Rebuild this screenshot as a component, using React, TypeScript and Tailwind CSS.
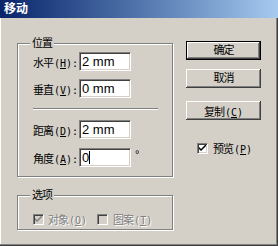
import React from "react";

const font = "font-['Liberation_Sans','Noto_Sans_CJK_SC',sans-serif]";
const mono = "font-['DejaVu_Sans_Mono',monospace] text-[10px]";

const Key = ({ k }: { k: string }) => <span className="underline underline-offset-[1px]">{k}</span>;

// "水平" + "(H):" styled like the old bitmap font: narrow cjk, monospace latin
const Label = ({ text, k, colon }: { text: string; k: string; colon?: boolean }) => (
    <span className="whitespace-nowrap">
        <span className="text-[11px] tracking-[-1px]">{text}</span>
        <span className={`${mono} ml-[1px]`}>
            (<Key k={k} />){colon ? ":" : ""}
        </span>
    </span>
);

const Field = ({ children }: { children: React.ReactNode }) => (
    <div className="w-[52px] h-[19px] bg-white flex items-center pl-[2px] text-[13px] text-black border-t border-l border-[#808080] border-b border-r border-b-white border-r-white shadow-[inset_1px_1px_0_#404040,inset_-1px_-1px_0_#d4d0c8]">
        {children}
    </div>
);

const Row = ({ label, k, value, caret }: { label: string; k: string; value: string; caret?: boolean }) => (
    <div className="flex items-center h-[19px]">
        <div className="w-[46px] text-black">
            <Label text={label} k={k} colon />
        </div>
        <Field>
            {value}
            {caret && <span className="w-[1px] h-[13px] bg-black" />}
        </Field>
    </div>
);

const Button = ({ children, isDefault }: { children: React.ReactNode; isDefault?: boolean }) => (
    <div
        className={`w-[75px] h-[19px] flex items-center justify-center text-black bg-[#d4d0c8] shadow-[inset_-1px_-1px_0_#404040,inset_1px_1px_0_#fff,inset_-2px_-2px_0_#808080] ${isDefault ? "border border-black" : ""
            }`}
    >
        {children}
    </div>
);

const Check = ({ checked, disabled }: { checked: boolean; disabled?: boolean }) => (
    <div
        className={`w-[11px] h-[11px] flex items-center justify-center border-t border-l border-[#808080] border-b border-r border-b-white border-r-white shadow-[inset_1px_1px_0_#404040,inset_-1px_-1px_0_#d4d0c8] ${disabled ? "bg-[#d4d0c8]" : "bg-white"
            }`}
    >
        {checked && (
            <svg width="7" height="7" viewBox="0 0 7 7">
                <path d="M0 2 L0 4 L2 6 L7 1 L7 -1 L2 4 Z" fill={disabled ? "#808080" : "#000"} />
            </svg>
        )}
    </div>
);

const Group = ({ title, className, children }: { title: string; className: string; children: React.ReactNode }) => (
    <div className={`relative border border-[#808080] shadow-[1px_1px_0_#fff,inset_1px_1px_0_#fff] ${className}`}>
        <span className="absolute -top-[8px] left-[12px] px-[2px] bg-[#d4d0c8] text-[11px] tracking-[-1px] leading-[14px] text-black">{title}</span>
        {children}
    </div>
);

export default function App() {
    return (
        <div className={`w-[278px] h-[246px] bg-[#d4d0c8] shadow-[inset_-1px_-1px_0_#404040,inset_-2px_-2px_0_#808080,inset_1px_1px_0_#fff] ${font}`}>
            <div className="h-[18px] bg-linear-to-r from-[#0a246a] to-[#a6caf0] flex items-center pl-[4px] text-white font-bold text-[12px]">
                移动
            </div>

            <div className="flex pl-[17px] pt-[23px]">
                <div className="w-[156px]">
                    <Group title="位置" className="mt-[2px] h-[134px] pt-[8px] pl-[15px]">
                        <Row label="水平" k="H" value="2 mm" />
                        <div className="mt-[8px]">
                            <Row label="垂直" k="V" value="0 mm" />
                        </div>
                        <div className="mt-[10px] w-[125px] h-[2px] border-t border-[#808080] border-b border-b-white" />
                        <div className="mt-[10px]">
                            <Row label="距离" k="D" value="2 mm" />
                        </div>
                        <div className="mt-[9px] flex items-start">
                            <Row label="角度" k="A" value="0" caret />
                            <span className="ml-[4px] -mt-[2px] text-[11px] text-black">°</span>
                        </div>
                    </Group>

                    <Group title="选项" className="mt-[18px] h-[35px] pt-[11px] pl-[15px]">
                        <div className="flex items-center text-[#808080] [text-shadow:1px_1px_0_#fff]">
                            <Check checked disabled />
                            <span className="ml-[4px]">
                                <Label text="对象" k="O" />
                            </span>
                            <div className="ml-[10px]">
                                <Check checked={false} disabled />
                            </div>
                            <span className="ml-[5px]">
                                <Label text="图案" k="T" />
                            </span>
                        </div>
                    </Group>
                </div>

                <div className="ml-[13px] flex flex-col">
                    <Button isDefault>
                        <span className="text-[11px] tracking-[-1px]">确定</span>
                    </Button>
                    <div className="mt-[9px]">
                        <Button>
                            <span className="text-[11px] tracking-[-1px]">取消</span>
                        </Button>
                    </div>
                    <div className="mt-[13px]">
                        <Button>
                            <Label text="复制" k="C" />
                        </Button>
                    </div>
                    <div className="mt-[16px] ml-[11px] flex items-center text-black">
                        <Check checked />
                        <span className="ml-[5px]">
                            <Label text="预览" k="P" />
                        </span>
                    </div>
                </div>
            </div>
        </div>
    );
}
